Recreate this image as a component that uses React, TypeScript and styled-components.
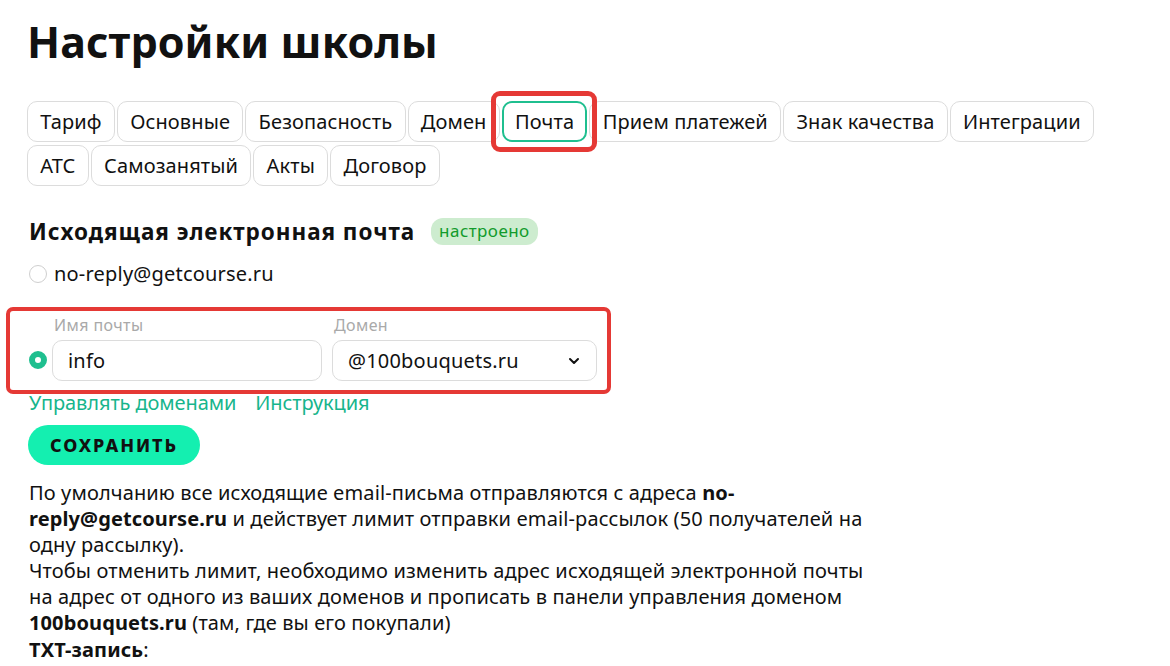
import React from "react";
import styled, { createGlobalStyle } from "styled-components";

const Global = createGlobalStyle`
  html, body { margin: 0; padding: 0; background: #fff; }
  body { font-family: "Noto Sans", "Open Sans", sans-serif; color: #111; }
  * { box-sizing: border-box; }
`;

const Page = styled.div`
  padding: 14px 28px 0 27px;
  width: 1170px;
  height: 666px;
  overflow: hidden;
`;

const Title = styled.h1`
  margin: 0;
  font-size: 43px;
  font-weight: 700;
  line-height: 56px;
  letter-spacing: 0.1px;
`;

const Tabs = styled.div`
  margin-top: 31px;
  display: flex;
  flex-direction: column;
  gap: 3px;
`;

const TabRow = styled.div`
  display: flex;
  gap: 2px;
`;

const Tab = styled.div<{ $active?: boolean }>`
  position: relative;
  height: 41px;
  padding: 0 ${(p) => (p.$active ? 11.25 : 12.25)}px;
  display: flex;
  align-items: center;
  font-size: 20px;
  letter-spacing: 0.12px;
  border-radius: 10px;
  border: ${(p) => (p.$active ? "2px solid #1fbf8f" : "1px solid #dcdcdc")};
  background: #fff;
  color: #111;
`;

const Highlight = styled.div`
  position: absolute;
  z-index: 2;
  inset: -12px -12px -12px -13px;
  border: 5px solid #e53935;
  border-radius: 9px;
  pointer-events: none;
`;

const SectionHead = styled.div`
  margin-top: 30px;
  display: flex;
  align-items: center;
  gap: 16px;
  padding-left: 2px;
`;

const H2 = styled.h2`
  margin: 0;
  font-size: 22.5px;
  font-weight: 700;
  letter-spacing: 0.95px;
`;

const Badge = styled.span`
  background: #cdeccf;
  color: #129b2c;
  border-radius: 12px;
  padding: 1px 8px 3px;
  font-size: 17px;
  letter-spacing: 0.45px;
`;

const RadioRow = styled.label`
  display: flex;
  align-items: center;
  gap: 7px;
  margin-top: 13px;
  padding-left: 2px;
  font-size: 20px;
  letter-spacing: 0.2px;
`;

const Radio = styled.span<{ $on?: boolean }>`
  width: 18px;
  height: 18px;
  border-radius: 50%;
  flex: none;
  border: ${(p) => (p.$on ? "6px solid #1fbf8f" : "1px solid #cfcfcf")};
  background: #fff;
`;

const FormBox = styled.div`
  position: relative;
  margin-top: 28px;
  display: flex;
  align-items: flex-end;
  padding-left: 2px;
`;

const SelRadio = styled(Radio)`
  margin-bottom: 12px;
  margin-right: 5px;
`;

const Field = styled.div<{ $w: number; $ml?: number }>`
  width: ${(p) => p.$w}px;
  margin-left: ${(p) => p.$ml ?? 0}px;
  display: flex;
  flex-direction: column;
`;

const FieldLabel = styled.div`
  font-size: 16px;
  letter-spacing: 0.4px;
  color: #a9a9a9;
  padding-left: 2px;
  line-height: 20px;
  margin-bottom: 5px;
`;

const Input = styled.div`
  height: 41px;
  border: 1px solid #dcdcdc;
  border-radius: 10px;
  display: flex;
  align-items: center;
  padding: 0 15px;
  font-size: 20px;
  letter-spacing: 0.2px;
  justify-content: space-between;
`;

const FormHighlight = styled.div`
  position: absolute;
  left: -21px;
  top: -8px;
  width: 605px;
  height: 87px;
  border: 4px solid #e53935;
  border-radius: 7px;
  pointer-events: none;
`;

const Links = styled.div`
  display: flex;
  gap: 19px;
  margin-top: 10px;
  padding-left: 2px;
  font-size: 20px;
  letter-spacing: -0.1px;
  color: #17b58c;
  line-height: 24px;
`;

const SaveButton = styled.button`
  margin-top: 10px;
  margin-left: 1px;
  height: 40px;
  width: 172px;
  border: none;
  border-radius: 20px;
  background: #14efb0;
  font-family: inherit;
  font-weight: 800;
  font-size: 18px;
  letter-spacing: 1.95px;
  color: #111;
`;

const Text = styled.p`
  margin: 15px 0 0 2px;
  width: 850px;
  font-size: 20px;
  letter-spacing: 0.12px;
  line-height: 26.1px;
  b { font-weight: 700; }
`;

const Chevron = () => (
  <svg width="14" height="14" viewBox="0 0 14 14">
    <path d="M3 5l4 4 4-4" fill="none" stroke="#111" strokeWidth="2" strokeLinecap="round" strokeLinejoin="round" />
  </svg>
);

const tabRows = [
  ["Тариф", "Основные", "Безопасность", "Домен", "Почта", "Прием платежей", "Знак качества", "Интеграции"],
  ["АТС", "Самозанятый", "Акты", "Договор"],
];

export default function App() {
  return (
    <Page>
      <Global />
      <Title>Настройки школы</Title>
      <Tabs>
        {tabRows.map((row, i) => (
          <TabRow key={i}>
            {row.map((t) => (
              <Tab key={t} $active={t === "Почта"}>
                {t}
                {t === "Почта" && <Highlight />}
              </Tab>
            ))}
          </TabRow>
        ))}
      </Tabs>
      <SectionHead>
        <H2>Исходящая электронная почта</H2>
        <Badge>настроено</Badge>
      </SectionHead>
      <RadioRow>
        <Radio />
        no-reply@getcourse.ru
      </RadioRow>
      <FormBox>
        <FormHighlight />
        <SelRadio $on />
        <Field $w={270}>
          <FieldLabel>Имя почты</FieldLabel>
          <Input>info</Input>
        </Field>
        <Field $w={265} $ml={10}>
          <FieldLabel>Домен</FieldLabel>
          <Input>
            @100bouquets.ru
            <Chevron />
          </Input>
        </Field>
      </FormBox>
      <Links>
        <span>Управлять доменами</span>
        <span>Инструкция</span>
      </Links>
      <SaveButton>СОХРАНИТЬ</SaveButton>
      <Text>
        По умолчанию все исходящие email-письма отправляются с адреса <b>no-reply@getcourse.ru</b> и действует лимит отправки
        email-рассылок (50 получателей на одну рассылку).
        <br />
        Чтобы отменить лимит, необходимо изменить адрес исходящей электронной почты на адрес от одного из ваших доменов и
        прописать в панели управления доменом <b>100bouquets.ru</b> (там, где вы его покупали)
        <br />
        <b>TXT-запись</b>:
      </Text>
    </Page>
  );
}
